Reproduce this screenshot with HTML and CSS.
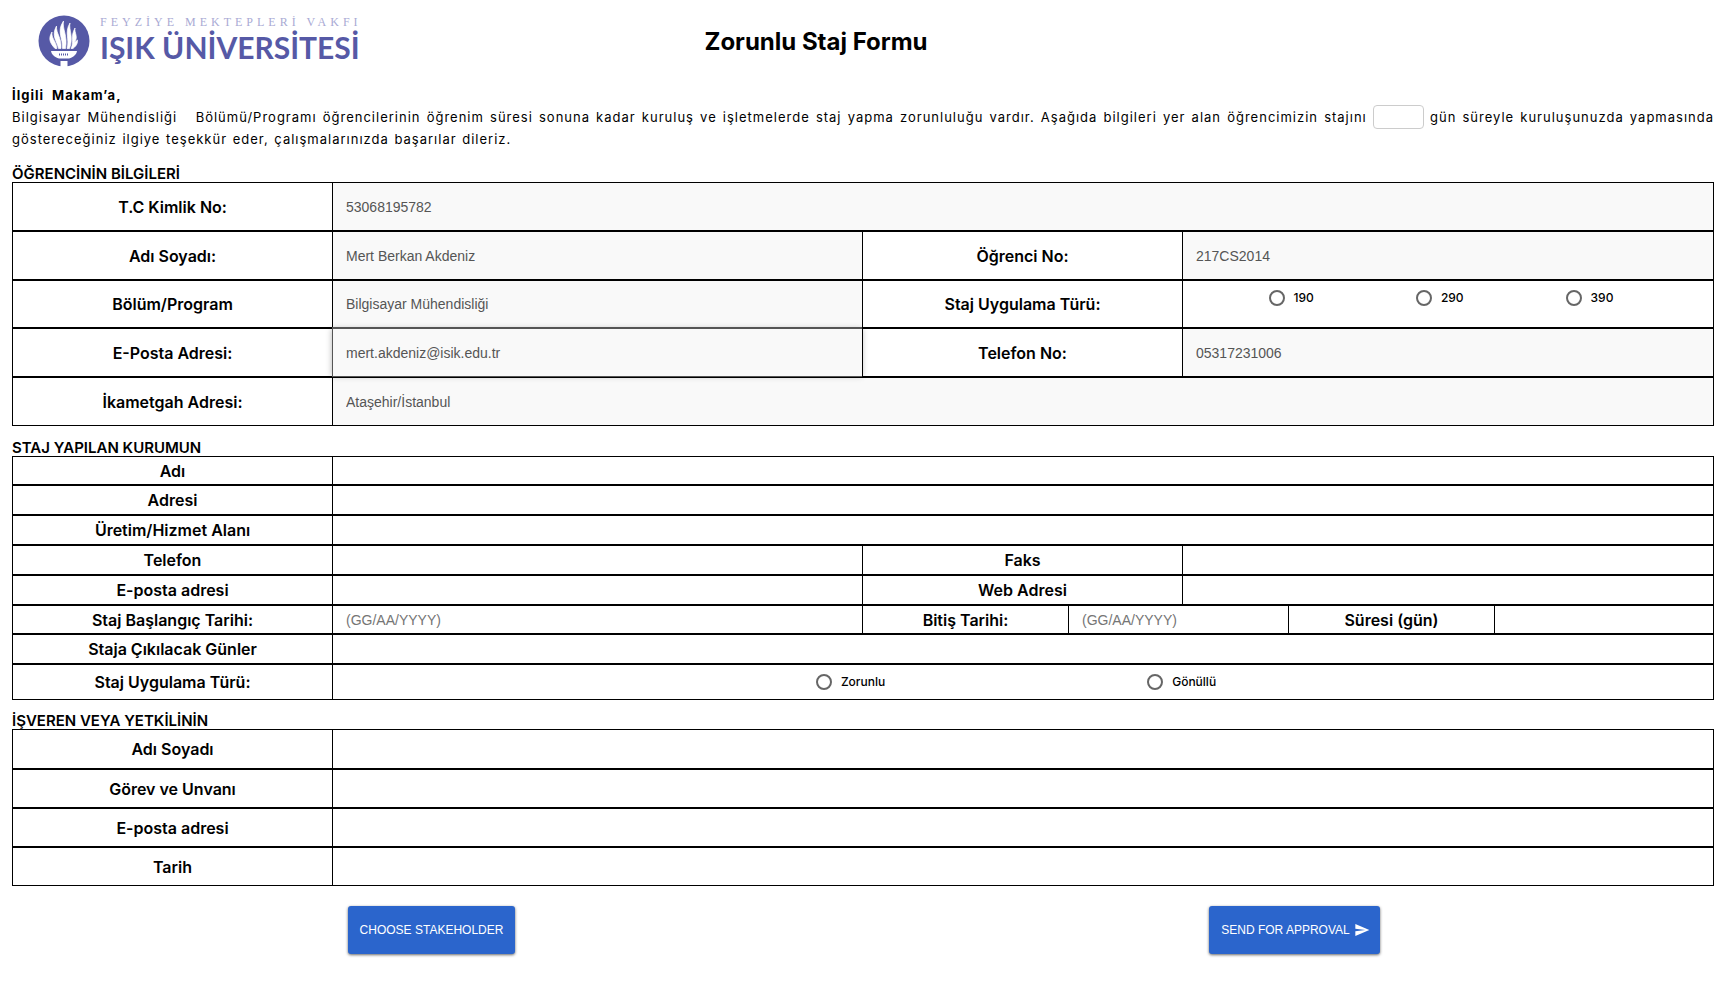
FILE: index.html
```html
<!DOCTYPE html>
<html lang="tr">
<head>
<meta charset="utf-8">
<meta name="viewport" content="width=device-width, initial-scale=1">
<title>Zorunlu Staj Formu</title>
<link rel="stylesheet" href="styles.css">
</head>
<body>
<form class="page">
  <header class="header">
    <div class="brand">
      <svg class="brand-mark" viewBox="0 0 52 52" aria-hidden="true">
        <circle cx="26" cy="26" r="25.5" fill="#5659a6"/>
        <path fill="#fff" d="M13 36H39C38.500 39.500 35.500 42 31 43.500H21C16.500 42 13.500 39.500 13 36Z"/>
        <path fill="#fff" d="M22.500 46h7V52h-7z"/>
        <path fill="#fff" stroke="#fff" stroke-width=".7" stroke-linejoin="round" d="M17 33.500C11 27 10.500 23 14 17C13 23 18 26 19 33.500ZM20.500 33.500C19 26 13 21 18.500 11C18 19 24 23 23 33.500ZM24.500 33.500C25.500 24 18 17 25.500 6C24 14 30 21 27.500 33.500ZM29 33.500C32 24 26 18 32 8C30.500 15 36 22 31.500 33.500ZM33 33.500C36.500 27 32 22 37 13C36 18 41 22 36 28L39.500 25C40 29 37 32 35 33.500Z"/>
        <path stroke="#5659a6" stroke-width="2" stroke-dasharray="1 1" fill="none" d="M21 39.500h10"/>
      </svg>
      <div class="brand-text">
        <span class="brand-owner">FEYZİYE MEKTEPLERİ VAKFI</span>
        <span class="brand-name">IŞIK ÜNİVERSİTESİ</span>
      </div>
    </div>
    <h1 class="title">Zorunlu Staj Formu</h1>
  </header>

  <div class="intro">
    <strong class="intro-to">İlgili Makam’a,</strong>
    <p class="intro-text">Bilgisayar Mühendisliği &nbsp; Bölümü/Programı öğrencilerinin öğrenim süresi sonuna kadar kuruluş ve işletmelerde staj yapma zorunluluğu vardır. Aşağıda bilgileri yer alan öğrencimizin stajını <input class="days" type="text" aria-label="Gün"> gün süreyle kuruluşunuzda yapmasında göstereceğiniz ilgiye teşekkür eder, çalışmalarınızda başarılar dileriz.</p>
  </div>

  <section class="section">
    <h2 class="section-title">ÖĞRENCİNİN BİLGİLERİ</h2>
    <div class="row row-tall one">
      <label class="label" for="tc">T.C Kimlik No:</label><input class="field" id="tc" value="53068195782" disabled>
    </div>
    <div class="row row-tall two">
      <label class="label" for="ad">Adı Soyadı:</label><input class="field" id="ad" value="Mert Berkan Akdeniz" disabled>
      <label class="label" for="no">Öğrenci No:</label><input class="field" id="no" value="217CS2014" disabled>
    </div>
    <div class="row row-tall row-course two">
      <label class="label" for="bolum">Bölüm/Program</label><input class="field" id="bolum" value="Bilgisayar Mühendisliği" disabled>
      <span class="label" id="ders">Staj Uygulama Türü:</span>
      <div class="choices choices-course" role="radiogroup" aria-labelledby="ders">
        <label class="choice"><input type="radio" name="ders">190</label>
        <label class="choice"><input type="radio" name="ders">290</label>
        <label class="choice"><input type="radio" name="ders">390</label>
      </div>
    </div>
    <div class="row row-tall two">
      <label class="label" for="mail">E-Posta Adresi:</label><input class="field field-raised" id="mail" value="mert.akdeniz@isik.edu.tr" disabled>
      <label class="label" for="tel">Telefon No:</label><input class="field" id="tel" value="05317231006" disabled>
    </div>
    <div class="row row-tall one">
      <label class="label" for="adres">İkametgah Adresi:</label><input class="field" id="adres" value="Ataşehir/İstanbul" disabled>
    </div>
  </section>

  <section class="section">
    <h2 class="section-title">STAJ YAPILAN KURUMUN</h2>
    <div class="row row-short one"><label class="label" for="k-ad">Adı</label><input class="field" id="k-ad"></div>
    <div class="row one"><label class="label" for="k-adres">Adresi</label><input class="field" id="k-adres"></div>
    <div class="row one"><label class="label" for="k-alan">Üretim/Hizmet Alanı</label><input class="field" id="k-alan"></div>
    <div class="row two">
      <label class="label" for="k-tel">Telefon</label><input class="field" id="k-tel">
      <label class="label" for="k-faks">Faks</label><input class="field" id="k-faks">
    </div>
    <div class="row two">
      <label class="label" for="k-mail">E-posta adresi</label><input class="field" id="k-mail">
      <label class="label" for="k-web">Web Adresi</label><input class="field" id="k-web">
    </div>
    <div class="row row-short three">
      <label class="label" for="bas">Staj Başlangıç Tarihi:</label><input class="field" id="bas" placeholder="(GG/AA/YYYY)">
      <label class="label" for="bit">Bitiş Tarihi:</label><input class="field" id="bit" placeholder="(GG/AA/YYYY)">
      <label class="label" for="sure">Süresi (gün)</label><input class="field" id="sure">
    </div>
    <div class="row one"><label class="label" for="gunler">Staja Çıkılacak Günler</label><input class="field" id="gunler"></div>
    <div class="row row-kind one">
      <span class="label" id="tur">Staj Uygulama Türü:</span>
      <div class="choices choices-kind" role="radiogroup" aria-labelledby="tur">
        <label class="choice"><input type="radio" name="tur">Zorunlu</label>
        <label class="choice"><input type="radio" name="tur">Gönüllü</label>
      </div>
    </div>
  </section>

  <section class="section section-employer">
    <h2 class="section-title">İŞVEREN VEYA YETKİLİNİN</h2>
    <div class="row row-lead one"><label class="label" for="i-ad">Adı Soyadı</label><input class="field" id="i-ad"></div>
    <div class="row row-medium one"><label class="label" for="i-gorev">Görev ve Unvanı</label><input class="field" id="i-gorev"></div>
    <div class="row row-medium one"><label class="label" for="i-mail">E-posta adresi</label><input class="field" id="i-mail"></div>
    <div class="row row-medium one"><label class="label" for="i-tarih">Tarih</label><input class="field" id="i-tarih"></div>
  </section>

  <div class="actions">
    <div class="action"><button class="button" type="button">CHOOSE STAKEHOLDER</button></div>
    <div class="action"><button class="button button-icon" type="button">SEND FOR APPROVAL
      <svg class="send" viewBox="0 0 24 24" aria-hidden="true"><path fill="#fff" d="M2.010 21L23 12 2.010 3 2 10l15 2-15 2z"/></svg></button></div>
  </div>
</form>
</body>
</html>
```
FILE: styles.css
```css
* {
  box-sizing: border-box;
}

body {
  margin: 0;
  background: #fff;
  color: #000;
  font-family: Inter, "Liberation Sans", sans-serif;
}

.page {
  padding: 0 12px;
}

.header {
  display: grid;
  grid-template-columns: 1fr auto 1fr;
  align-items: center;
  min-height: 84px;
  padding-right: 94px;
}

.brand {
  display: flex;
  gap: 10px;
  padding: 0 0 2px 26px;
}

.brand-mark {
  width: 52px;
  height: 52px;
}

.brand-text {
  display: flex;
  flex-direction: column;
  white-space: nowrap;
}

.brand-owner {
  color: #a9aad4;
  font: 12px/14px "Liberation Serif", serif;
  letter-spacing: 4px;
}

.brand-name {
  color: #5659a6;
  font: 700 30px/36px Lato, sans-serif;
}

.title {
  margin: 0;
  font-size: 24px;
  font-weight: 700;
  line-height: 32px;
}

.intro {
  padding-bottom: 2px;
  font-size: 13px;
  line-height: 22px;
  letter-spacing: 1px;
  word-spacing: 1px;
}

.intro-to {
  display: block;
  word-spacing: 4px;
}

.intro-text {
  margin: 0;
  text-align: justify;
}

.days {
  width: 51px;
  height: 24px;
  margin: -3px 0 -1px;
  border: 1px solid #ccc;
  border-radius: 4px;
  vertical-align: middle;
}

.section {
  margin-top: 14px;
}

.section-employer {
  margin-top: 13px;
}

.section-title {
  margin: 0;
  font-size: 15px;
  font-weight: 600;
  line-height: 16px;
}

.row {
  display: grid;
  min-height: 30px;
  border: 1px solid #000;
}

.one {
  grid-template-columns: 319fr 1381fr;
}

.two {
  grid-template-columns: 319fr 530fr 320fr 531fr;
}

.three {
  grid-template-columns: 319fr 530fr 206fr 220fr 206fr 219fr;
}

.row-short {
  min-height: 29px;
}

.row-kind {
  min-height: 36px;
}

.row-medium {
  min-height: 39px;
}

.row-lead {
  min-height: 40px;
}

.row-tall {
  min-height: 49px;
}

.row-course {
  min-height: 48px;
}

.label {
  display: flex;
  align-items: center;
  justify-content: center;
  font-size: 16px;
  font-weight: 600;
  line-height: 20px;
}

.field {
  width: 100%;
  min-width: 0;
  padding: 0 13px;
  border: 0;
  border-radius: 0;
  background: #fff;
  color: #555;
  font: 14px/20px "Liberation Sans", Arial, sans-serif;
}

.row > * + * {
  border-left: 1px solid #000;
}

.field:disabled {
  background: #f9f9f9;
}

.field::placeholder {
  color: #757575;
}

.row > .field-raised {
  z-index: 1;
  border-left-color: #555;
  box-shadow: 0 -2px 0 #555, 0 1px 0 #555, 0 0 6px rgba(0, 0, 0, 0.3);
}

.choices {
  display: flex;
  justify-content: center;
  padding-right: 14px;
}

.choices-course {
  align-items: flex-start;
  gap: 102px;
  padding-top: 8px;
}

.choices-kind {
  align-items: center;
  gap: 262px;
}

.choice {
  display: flex;
  align-items: center;
  gap: 9px;
  font-size: 12px;
  font-weight: 500;
  line-height: 18px;
}

.choice input {
  width: 16px;
  height: 16px;
  margin: 0;
  border: 2px solid #666;
  border-radius: 50%;
  appearance: none;
  background: #fff;
}

.choice input:checked {
  background: #2b65cc;
}

.actions {
  display: grid;
  grid-template-columns: 1fr 1fr;
  margin: 0 -12px;
  padding: 20px 0;
}

.action {
  display: flex;
  justify-content: center;
}

.button {
  display: flex;
  align-items: center;
  gap: 4px;
  height: 48px;
  padding: 0 12px;
  border: 0;
  border-radius: 3px;
  background: #2b65cc;
  box-shadow: 0 1px 3px rgba(0, 0, 0, 0.6);
  color: #fff;
  font: 12px/16px "Liberation Sans", Arial, sans-serif;
}

.button-icon {
  padding-right: 10px;
}

.send {
  width: 16px;
  height: 16px;
}
```
